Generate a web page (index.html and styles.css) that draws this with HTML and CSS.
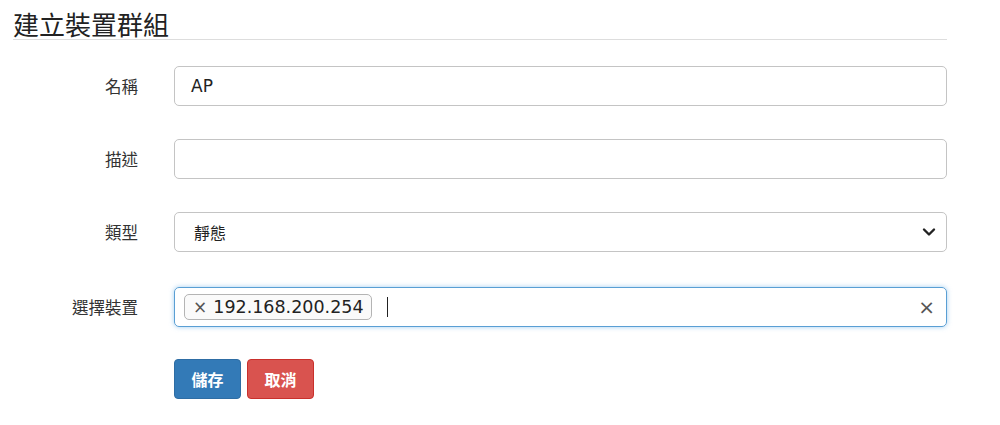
FILE: index.html
```html
<!DOCTYPE html>
<html lang="zh-Hant">
<head>
    <meta charset="UTF-8">
    <meta name="viewport" content="width=device-width, initial-scale=1.0">
    <title>建立裝置群組</title>
    <link rel="stylesheet" href="styles.css">
</head>
<body>
    <div class="pagina">
        <h2 class="titulo">建立裝置群組</h2>

        <form class="formulario">
            <div class="linha">
                <label class="rotulo">名稱</label>
                <div class="campo">AP</div>
            </div>
            <div class="linha">
                <label class="rotulo">描述</label>
                <div class="campo"></div>
            </div>
            <div class="linha tipo">
                <label class="rotulo">類型</label>
                <div class="campo selecao">
                    <span>靜態</span>
                    <svg class="seta" width="14" height="10" viewBox="0 0 14 10">
                        <path d="M2 2.5 L7 7.5 L12 2.5" fill="none" stroke="#222" stroke-width="2.4" stroke-linecap="round" stroke-linejoin="round"/>
                    </svg>
                </div>
            </div>
            <div class="linha dispositivos">
                <label class="rotulo">選擇裝置</label>
                <div class="campo tags">
                    <span class="tag"><span class="tag-x">×</span>192.168.200.254</span>
                    <span class="cursor"></span>
                    <span class="limpar">×</span>
                </div>
            </div>
            <div class="linha">
                <span></span>
                <div class="acoes">
                    <button type="button" class="btn salvar">儲存</button>
                    <button type="button" class="btn cancelar">取消</button>
                </div>
            </div>
        </form>
    </div>
</body>
</html>
```

FILE: styles.css
```css
body {
    margin: 0;
    font-family: "DejaVu Sans", "Noto Sans CJK TC", sans-serif;
    color: #333;
    background: #fff;
}
.pagina {
    width: 934px;
    padding: 9px 0 0 13px;
}
.titulo {
    margin: 0;
    font-family: "Noto Sans CJK TC", sans-serif;
    font-weight: 400;
    font-size: 26px;
    line-height: 30px;
    color: #222;
    border-bottom: 1px solid #ddd;
}
.formulario {
    margin-top: 26px;
}
.linha {
    display: grid;
    grid-template-columns: 125px 1fr;
    column-gap: 36px;
    align-items: center;
    margin-bottom: 33px;
}
.tipo {
    margin-bottom: 35px;
}
.dispositivos {
    margin-bottom: 32px;
}
.rotulo {
    text-align: right;
    font-family: "Noto Sans CJK TC", sans-serif;
    font-size: 16.5px;
    color: #333;
}
.campo {
    height: 40px;
    box-sizing: border-box;
    border: 1px solid #c4c4c4;
    border-radius: 5px;
    padding: 0 16px;
    display: flex;
    align-items: center;
    font-size: 17px;
    color: #222;
}
.selecao {
    justify-content: space-between;
    padding-left: 19px;
    padding-right: 10px;
    font-family: "Noto Sans CJK TC", sans-serif;
    font-size: 16px;
}
.tags {
    border-color: #5a9fd4;
    box-shadow: 0 0 5px rgba(102, 175, 233, 0.6);
    padding-left: 9px;
    padding-right: 11px;
}
.tag {
    border: 1px solid #b4b4b4;
    border-radius: 5px;
    background: #fafafa;
    height: 26px;
    box-sizing: border-box;
    padding: 0 7px 0 8px;
    display: flex;
    align-items: center;
    font-size: 17.5px;
    color: #222;
}
.tag-x {
    color: #555;
    font-size: 17px;
    margin-right: 6px;
}
.cursor {
    width: 1px;
    height: 20px;
    background: #222;
    margin-left: 15px;
}
.limpar {
    margin-left: auto;
    font-size: 20px;
    color: #555;
}
.acoes {
    display: flex;
    gap: 6px;
}
.btn {
    height: 40px;
    width: 67px;
    border-radius: 4px;
    color: #fff;
    font-family: "Noto Sans CJK TC", sans-serif;
    font-size: 16px;
    font-weight: 700;
    cursor: pointer;
}
.salvar {
    background: #337ab7;
    border: 1px solid #2e6da4;
}
.cancelar {
    background: #d9534f;
    border: 1px solid #c9302c;
}
```
